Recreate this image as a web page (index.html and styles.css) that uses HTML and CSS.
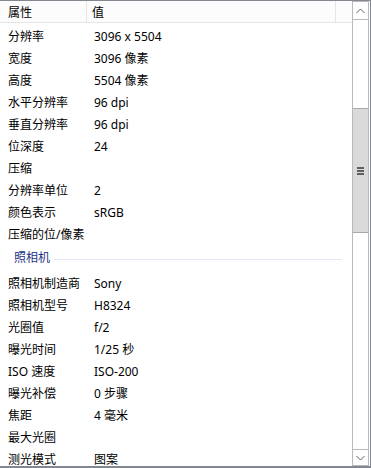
FILE: index.html
```html
<!DOCTYPE html>
<html lang="zh-CN">
<head>
  <meta charset="UTF-8" />
  <title>详细信息</title>
  <link rel="stylesheet" href="styles.css">
</head>
<body>
  <div class="window">
    <div class="list">
      <div class="header">
        <div class="col col-name">属性</div>
        <div class="col col-value">值</div>
        <div class="col col-fill"></div>
      </div>
      <div class="rows">
        <div class="row"><span class="name">分辨率</span><span class="value">3096 x 5504</span></div>
        <div class="row"><span class="name">宽度</span><span class="value">3096 像素</span></div>
        <div class="row"><span class="name">高度</span><span class="value">5504 像素</span></div>
        <div class="row"><span class="name">水平分辨率</span><span class="value">96 dpi</span></div>
        <div class="row"><span class="name">垂直分辨率</span><span class="value">96 dpi</span></div>
        <div class="row"><span class="name">位深度</span><span class="value">24</span></div>
        <div class="row"><span class="name">压缩</span><span class="value"></span></div>
        <div class="row"><span class="name">分辨率单位</span><span class="value">2</span></div>
        <div class="row"><span class="name">颜色表示</span><span class="value">sRGB</span></div>
        <div class="row"><span class="name">压缩的位/像素</span><span class="value"></span></div>
        <div class="group"><span class="group-title">照相机</span><span class="group-rule"></span></div>
        <div class="row"><span class="name">照相机制造商</span><span class="value">Sony</span></div>
        <div class="row"><span class="name">照相机型号</span><span class="value">H8324</span></div>
        <div class="row"><span class="name">光圈值</span><span class="value">f/2</span></div>
        <div class="row"><span class="name">曝光时间</span><span class="value">1/25 秒</span></div>
        <div class="row"><span class="name">ISO 速度</span><span class="value">ISO-200</span></div>
        <div class="row"><span class="name">曝光补偿</span><span class="value">0 步骤</span></div>
        <div class="row"><span class="name">焦距</span><span class="value">4 毫米</span></div>
        <div class="row"><span class="name">最大光圈</span><span class="value"></span></div>
        <div class="row"><span class="name">测光模式</span><span class="value">图案</span></div>
      </div>
    </div>
    <div class="scrollbar">
      <div class="sb-btn sb-up">
        <svg width="9" height="6" viewBox="0 0 9 6"><path d="M0.5 5 L4.5 1 L8.5 5" fill="none" stroke="#606060" stroke-width="1"/></svg>
      </div>
      <div class="sb-track">
        <div class="sb-thumb"><span class="grip"></span></div>
      </div>
      <div class="sb-btn sb-down">
        <svg width="9" height="6" viewBox="0 0 9 6"><path d="M0.5 1 L4.5 5 L8.5 1" fill="none" stroke="#606060" stroke-width="1"/></svg>
      </div>
    </div>
  </div>
</body>
</html>
```

FILE: styles.css
```css
body {
  margin: 0;
  background: #ffffff;
  font-family: "Noto Sans", "Noto Sans CJK SC", sans-serif;
  font-size: 12px;
  color: #000000;
}
.window {
  width: 371px;
  height: 468px;
  box-sizing: border-box;
  border-top: 1px solid #828790;
  border-right: 1px solid #828790;
  border-bottom: 2px solid #828790;
  display: flex;
  overflow: hidden;
  background: #ffffff;
}
.list {
  width: 352px;
  flex: none;
  overflow: hidden;
}
.header {
  display: flex;
  height: 21px;
  border-bottom: 1px solid #e5e5e5;
  background: #fcfcfc;
}
.col {
  line-height: 21px;
  padding-top: 1px;
  box-sizing: border-box;
  white-space: nowrap;
}
.col-name {
  width: 87px;
  padding-left: 8px;
  border-right: 1px solid #e5e5e5;
}
.col-value {
  width: 249px;
  padding-left: 5px;
  border-right: 1px solid #e5e5e5;
}
.col-fill {
  flex: 1;
}
.rows {
  padding-top: 2px;
}
.row {
  display: grid;
  grid-template-columns: 87px 1fr;
  height: 22px;
  box-sizing: border-box;
  padding-top: 1px;
  line-height: 21px;
  white-space: nowrap;
}
.row .name {
  padding-left: 8px;
}
.row .value {
  padding-left: 7px;
}
.group {
  display: flex;
  align-items: center;
  height: 22px;
  line-height: 22px;
  padding: 2px 0 3px 14px;
}
.group-title {
  color: #1e3287;
}
.group-rule {
  flex: 1;
  height: 1px;
  margin: 3px 10px 0 4px;
  background: #e2e9f4;
}
.scrollbar {
  width: 17px;
  height: 465px;
  box-sizing: border-box;
  border: 1px solid #b9b9b9;
  display: flex;
  flex-direction: column;
  flex: none;
}
.sb-btn {
  display: flex;
  align-items: center;
  justify-content: center;
  background: #ffffff;
}
.sb-up {
  height: 17px;
  border-bottom: 1px solid #b9b9b9;
}
.sb-down {
  height: 15px;
  border-top: 1px solid #b9b9b9;
}
.sb-track {
  flex: 1;
  background: #ffffff;
}
.sb-thumb {
  margin-top: 88px;
  height: 125px;
  box-sizing: border-box;
  border-top: 1px solid #a8a8a8;
  border-bottom: 1px solid #a8a8a8;
  background: #dadada;
  display: flex;
  align-items: center;
  justify-content: center;
}
.grip {
  width: 7px;
  height: 8px;
  background: repeating-linear-gradient(#606060 0 2px, transparent 2px 3px);
}
```
